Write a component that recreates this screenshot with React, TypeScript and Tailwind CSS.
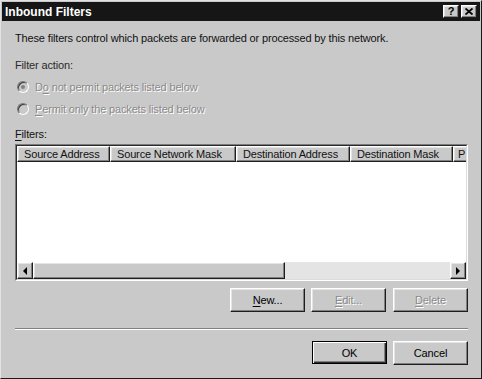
import React from 'react';

// ---------------------------------------------------------------------------
// Small pieces of the classic dialog chrome
// ---------------------------------------------------------------------------

const raised =
  'border border-t-white border-l-white border-r-[#1e1e1e] border-b-[#1e1e1e] shadow-[inset_-1px_-1px_#808080,inset_1px_1px_#e4e4e4]';

function U({ children }: { children: React.ReactNode }) {
  return <span className="underline underline-offset-2">{children}</span>;
}

function Radio({ checked, children }: { checked?: boolean; children: React.ReactNode }) {
  return (
    <div className="flex h-[14px] items-center gap-[6px] pl-[2px]">
      <span className="flex h-[12px] w-[12px] items-center justify-center rounded-full border border-t-[#7a7a7a] border-l-[#7a7a7a] border-r-white border-b-white bg-[#c9c9c9] shadow-[inset_1px_1px_#3a3a3a]">
        {checked && <span className="h-[4px] w-[4px] rounded-full bg-[#808080]" />}
      </span>
      <span className="text-[#8a8a8a] [text-shadow:1px_1px_0_#fff]">{children}</span>
    </div>
  );
}

function Button({
  children,
  disabled,
  isDefault,
}: {
  children: React.ReactNode;
  disabled?: boolean;
  isDefault?: boolean;
}) {
  return (
    <button
      className={
        isDefault
          ? 'h-[23px] w-[75px] border border-black bg-[#c9c9c9] text-black shadow-[inset_1px_1px_#fff,inset_-1px_-1px_#2a2a2a,inset_-2px_-2px_#808080]'
          : `h-[24px] w-[75px] bg-[#c9c9c9] ${raised} ${
              disabled ? 'text-[#8a8a8a] [text-shadow:1px_1px_0_#fff]' : 'text-black'
            }`
      }
    >
      {children}
    </button>
  );
}

function ArrowButton({ dir }: { dir: 'left' | 'right' }) {
  return (
    <div className={`flex h-full w-[16px] shrink-0 items-center justify-center bg-[#c9c9c9] ${raised}`}>
      <svg width="6" height="8" viewBox="0 0 6 8">
        {dir === 'left' ? <path d="M5 0 L1 4 L5 8 Z" fill="#000" /> : <path d="M1 0 L5 4 L1 8 Z" fill="#000" />}
      </svg>
    </div>
  );
}

const columns = [
  { label: 'Source Address', w: 'w-[93px] pl-[6px]' },
  { label: 'Source Network Mask', w: 'w-[126px] pl-[6px]' },
  { label: 'Destination Address', w: 'w-[114px] pl-[6px]' },
  { label: 'Destination Mask', w: 'w-[103px] pl-[6px]' },
  { label: 'P', w: 'w-[40px] pl-[4px]' },
];

// ---------------------------------------------------------------------------
// App
// ---------------------------------------------------------------------------

export default function App() {
  return (
    <div
      className="flex h-[379px] w-[482px] flex-col overflow-hidden border border-t-[#e2e2e2] border-l-[#e2e2e2] border-r-[#1a1a1a] border-b-[#1a1a1a] bg-[#c9c9c9] p-[1px] text-[11px] leading-[14px] tracking-[-0.15px] text-[#111]"
      style={{ fontFamily: '"Liberation Sans", Arial, sans-serif' }}
    >
      {/* Title bar */}
      <div className="flex h-[19px] shrink-0 items-center justify-between bg-[#161616] pl-[3px] pr-[3px]">
        <span className="text-[12px] font-bold tracking-normal text-white">Inbound Filters</span>
        <div className="flex gap-[2px]">
          <span className={`flex h-[13px] w-[16px] items-center justify-center bg-[#c9c9c9] text-[11px] font-bold leading-none text-black ${raised}`}>
            ?
          </span>
          <span className={`flex h-[13px] w-[16px] items-center justify-center bg-[#c9c9c9] ${raised}`}>
            <svg width="8" height="7" viewBox="0 0 8 7">
              <path d="M0.5 0.5 L7.5 6.5 M7.5 0.5 L0.5 6.5" stroke="#000" strokeWidth="1.8" />
            </svg>
          </span>
        </div>
      </div>

      {/* Body */}
      <div className="flex flex-col pl-[13px] pr-[12px]">
        <p className="mt-[10px]">These filters control which packets are forwarded or processed by this network.</p>
        <p className="mt-[13px] text-[#2a2a2a]">Filter action:</p>

        <div className="mt-[8px]">
          <Radio checked>
            D<U>o</U> not permit packets listed below
          </Radio>
        </div>
        <div className="mt-[8px]">
          <Radio>
            <U>P</U>ermit only the packets listed below
          </Radio>
        </div>

        <p className="mt-[11px]">
          <U>F</U>ilters:
        </p>

        {/* List view */}
        <div className="mt-[3px] h-[137px] border border-t-[#7a7a7a] border-l-[#7a7a7a] border-r-white border-b-white">
          <div className="flex h-full flex-col overflow-hidden border border-t-[#2a2a2a] border-l-[#2a2a2a] border-r-[#dcdcdc] border-b-[#dcdcdc] bg-white">
            <div className="flex h-[16px] shrink-0">
              {columns.map((c) => (
                <div
                  key={c.label}
                  className={`${c.w} flex shrink-0 items-center whitespace-nowrap bg-[#c9c9c9] ${raised}`}
                >
                  {c.label}
                </div>
              ))}
            </div>
            <div className="flex-1 bg-white" />
            <div className="flex h-[17px] shrink-0">
              <ArrowButton dir="left" />
              <div className={`w-[252px] shrink-0 bg-[#c9c9c9] ${raised}`} />
              <div className="flex-1 bg-[#e4e4e4]" />
              <ArrowButton dir="right" />
            </div>
          </div>
        </div>

        <div className="mt-[7px] flex justify-end gap-[6px]">
          <Button>
            <U>N</U>ew...
          </Button>
          <Button disabled>
            <U>E</U>dit...
          </Button>
          <div className="ml-[1px]">
            <Button disabled>
              <U>D</U>elete
            </Button>
          </div>
        </div>

        <div className="mt-[16px] h-[2px] border-t border-t-[#808080] border-b border-b-white" />

        <div className="mt-[11px] flex justify-end gap-[6px]">
          <Button isDefault>OK</Button>
          <Button>Cancel</Button>
        </div>
      </div>
    </div>
  );
}
